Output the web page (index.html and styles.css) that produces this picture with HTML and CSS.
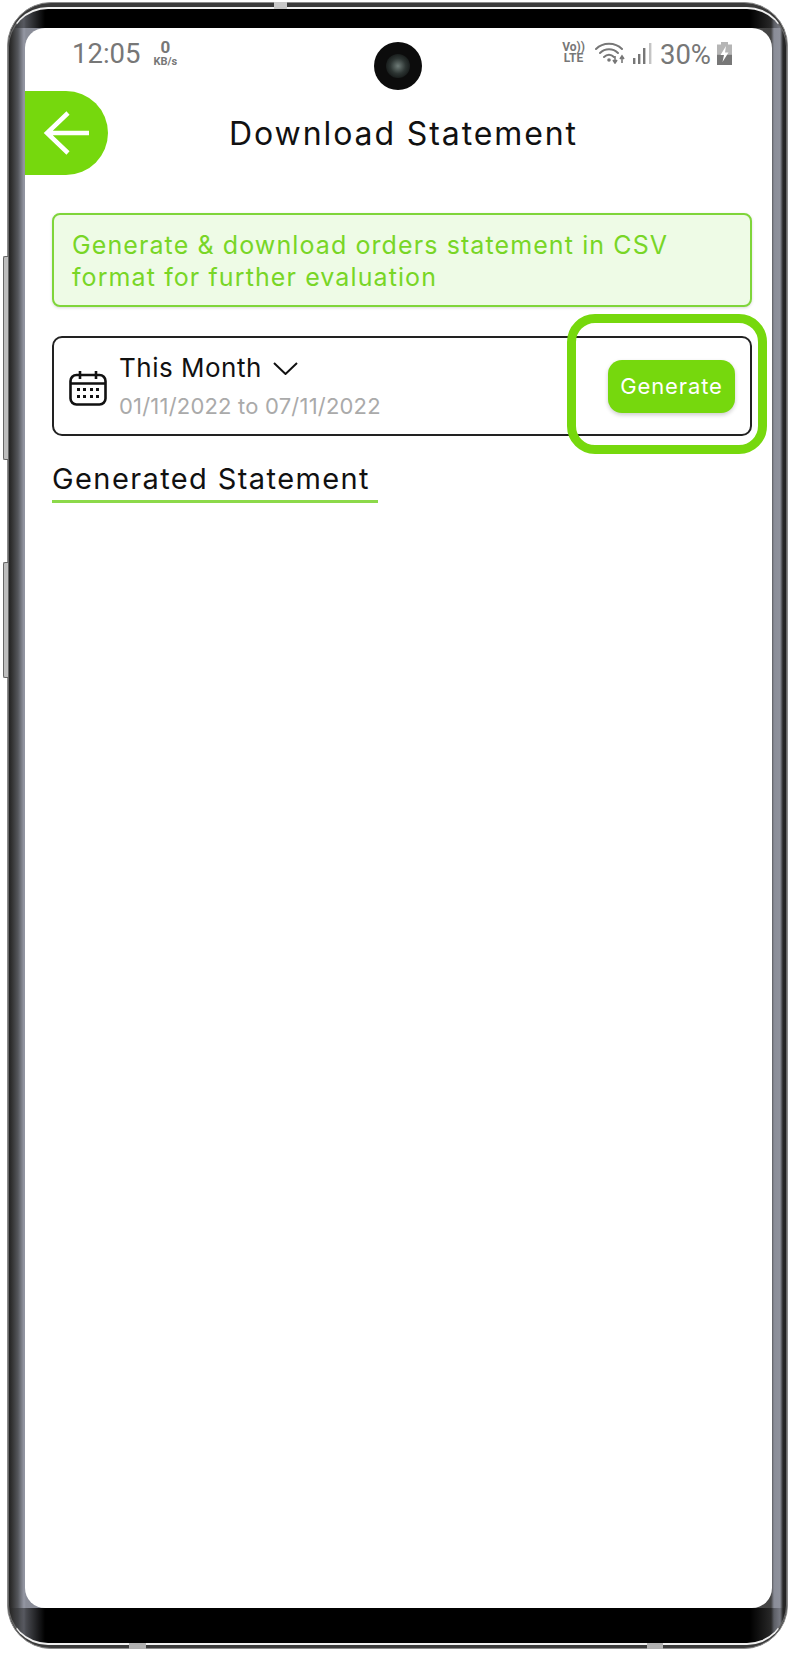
FILE: index.html
```html
<!DOCTYPE html>
<html lang="en">
<head>
  <meta charset="UTF-8">
  <meta name="viewport" content="width=device-width, initial-scale=1.0">
  <title>Download Statement</title>
  <link rel="stylesheet" href="styles.css">
</head>
<body>
  <div class="phone">
    <span class="side-key key-top"></span>
    <span class="side-key key-lower"></span>
    <span class="edge-nub nub-top"></span>
    <span class="edge-nub nub-bottom-left"></span>
    <span class="edge-nub nub-bottom-right"></span>
    <div class="phone-rim">
      <div class="bezel">
        <div class="screen">
          <div class="camera"><span class="camera-lens"></span></div>

          <div class="status-bar">
            <div class="status-left">
              <span class="clock">12:05</span>
              <span class="net-speed"><b>0</b><small>KB/s</small></span>
            </div>
            <div class="status-right">
              <span class="volte"><span>Vo))</span><span>LTE</span></span>
              <svg class="wifi" viewBox="0 0 32 22" width="32" height="22" aria-hidden="true">
                <g fill="none" stroke="#777" stroke-width="2" stroke-linecap="round">
                  <path d="M1 7 C8 0 20 0 27 7"/>
                  <path d="M5 11 C10 6 18 6 23 11"/>
                  <path d="M9 15 C12 12 16 12 19 15"/>
                </g>
                <circle cx="14" cy="18" r="1.8" fill="#777"/>
                <path d="M20 14v6M18 18l2 3 2-3M27 21v-6M25 17l2-3 2 3" fill="none" stroke="#777" stroke-width="1.6"/>
              </svg>
              <svg class="signal" viewBox="0 0 20 22" width="20" height="22" aria-hidden="true">
                <rect x="1" y="16" width="2.4" height="6" fill="#777"/>
                <rect x="6" y="12" width="2.4" height="10" fill="#777"/>
                <rect x="11" y="6" width="2.4" height="16" fill="#777"/>
                <rect x="17" y="1" width="2.4" height="21" fill="#c4c4c4"/>
              </svg>
              <span class="battery-text">30%</span>
              <svg class="battery" viewBox="0 0 15 23" width="15" height="23" aria-hidden="true">
                <rect x="4" y="0" width="7" height="3" fill="#b5b5b5"/>
                <rect x="0" y="2.5" width="15" height="10" fill="#b5b5b5"/>
                <rect x="0" y="12.5" width="15" height="10.5" fill="#777"/>
                <path d="M9 4 L3.5 13 H7 L5.5 20 L11.5 10.5 H8 Z" fill="#fff"/>
              </svg>
            </div>
          </div>

          <header class="page-header">
            <a class="back-btn" href="#" aria-label="Back">
              <svg viewBox="0 0 48 46" width="48" height="46" aria-hidden="true">
                <path d="M46 23H4M25 3 4 23l21 20" fill="none" stroke="#fff" stroke-width="4.5"/>
              </svg>
            </a>
            <h1>Download Statement</h1>
          </header>

          <main class="content">
            <p class="notice">Generate &amp; download orders statement in CSV format for further evaluation</p>

            <div class="period-card">
              <svg class="calendar" viewBox="0 0 38 36" width="38" height="36" aria-hidden="true">
                <rect x="1.5" y="5" width="35" height="29.5" rx="6" fill="none" stroke="#111" stroke-width="2.6"/>
                <path d="M1.5 13.5h35M11 1v8M27 1v8" fill="none" stroke="#111" stroke-width="2.6"/>
                <g fill="#111">
                  <rect x="8" y="18" width="3" height="3"/><rect x="14" y="18" width="3" height="3"/>
                  <rect x="21" y="18" width="3" height="3"/><rect x="27" y="18" width="3" height="3"/>
                  <rect x="8" y="25" width="3" height="3"/><rect x="14" y="25" width="3" height="3"/>
                  <rect x="21" y="25" width="3" height="3"/><rect x="27" y="25" width="3" height="3"/>
                </g>
              </svg>
              <div class="period-info">
                <div class="period-name">
                  This Month
                  <svg viewBox="0 0 25 13" width="25" height="13" aria-hidden="true">
                    <path d="M1 1l11.5 11L24 1" fill="none" stroke="#111" stroke-width="2"/>
                  </svg>
                </div>
                <div class="period-dates">01/11/2022 to 07/11/2022</div>
              </div>
              <button class="generate-btn">Generate</button>
              <span class="highlight-ring"></span>
            </div>

            <h2 class="section-title">Generated Statement</h2>
          </main>
        </div>
      </div>
    </div>
  </div>
</body>
</html>
```

FILE: styles.css
```css
* {
  box-sizing: border-box;
}

body {
  margin: 0;
  background-color: #fff;
  font-family: Inter, "Liberation Sans", sans-serif;
  color: #111;
}

/* phone frame */
.phone {
  position: relative;
  width: 781px;
  height: 1647px;
  margin: 2px 0 0 7px;
}

.phone-rim {
  height: 100%;
  padding: 4px 0 3px;
  border: 1px solid #8a8a8a;
  border-radius: 44px;
  background-color: #3a3a3a;
}

.bezel {
  height: 100%;
  padding: 19px 14px 35px 16px;
  border-style: solid;
  border-width: 2px 1px;
  border-color: #f0f0f0 #666;
  border-radius: 40px;
  background:
    linear-gradient(to right, transparent 0, #000 36px, #000 calc(100% - 36px), transparent 100%) top / 100% 19px no-repeat,
    linear-gradient(to right, transparent 0, #000 36px, #000 calc(100% - 36px), transparent 100%) bottom / 100% 35px no-repeat,
    linear-gradient(to right, #222 0, #333 3px, #55575c 9px, #9598a4 15px, #8a8d98 17px, #444 calc(100% - 15px), #8a8d98 calc(100% - 12px), #8f929c calc(100% - 6px), #2a2a2a calc(100% - 3px), #222 100%);
}

.screen {
  position: relative;
  height: 100%;
  border-radius: 20px;
  background-color: #fff;
  overflow: hidden;
}

.side-key {
  position: absolute;
  left: -4px;
  width: 5px;
  border: 1px solid #666;
  border-right: none;
  border-radius: 2px 0 0 2px;
  background-color: #bdbdbd;
}

.key-top {
  top: 254px;
  height: 204px;
}

.key-lower {
  top: 560px;
  height: 116px;
}

.edge-nub {
  position: absolute;
  height: 7px;
  background-color: #b0b0b0;
}

.nub-top {
  top: 0;
  left: 267px;
  width: 13px;
  background-color: #c8c8c8;
}

.nub-bottom-left {
  bottom: -1px;
  left: 122px;
  width: 17px;
}

.nub-bottom-right {
  bottom: -1px;
  left: 640px;
  width: 16px;
}

.camera {
  position: absolute;
  top: 14px;
  left: 349px;
  display: flex;
  align-items: center;
  justify-content: center;
  width: 48px;
  height: 48px;
  border-radius: 50%;
  background-color: #0c0c0c;
}

.camera-lens {
  width: 24px;
  height: 24px;
  border-radius: 50%;
  background: radial-gradient(circle, #6f7c78 0, #2d3533 45%, #161a19 75%);
}

/* status bar */
.status-bar {
  display: flex;
  justify-content: space-between;
  align-items: flex-start;
  height: 63px;
  padding: 11px 40px 0 47px;
  color: #777;
  font-family: Roboto, sans-serif;
}

.status-left {
  display: flex;
  gap: 13px;
}

.clock {
  font-size: 27.5px;
  line-height: 27px;
  margin-top: 1px;
}

.net-speed {
  display: flex;
  flex-direction: column;
  align-items: center;
  line-height: 1;
}

.net-speed b {
  font-size: 17px;
}

.net-speed small {
  font-size: 11px;
  font-weight: 700;
}

.status-right {
  display: flex;
  align-items: center;
  gap: 5px;
  margin-top: 1px;
}

.volte {
  display: flex;
  flex-direction: column;
  align-items: center;
  margin-right: 5px;
  font-size: 12px;
  font-weight: 700;
  line-height: 11px;
}

.battery-text {
  margin: 3px 1px 0 3px;
  font-size: 27.5px;
  line-height: 23px;
}

/* header */
.page-header {
  display: grid;
  grid-template-columns: 83px 1fr 73px;
  align-items: center;
}

.back-btn {
  display: flex;
  align-items: center;
  height: 84px;
  padding-left: 18px;
  border-radius: 0 42px 42px 0;
  background-color: #76d80d;
}

.page-header h1 {
  margin: 0;
  font-size: 32px;
  font-weight: 400;
  letter-spacing: 1.9px;
  text-align: center;
  color: #111;
}

/* content */
.content {
  padding: 38px 20px 0 27px;
}

.notice {
  margin: 0;
  padding: 14px 18px 12px;
  border: 2px solid #7fd53a;
  border-radius: 8px;
  background-color: #eefbe6;
  box-shadow: 0 1px 3px rgba(0, 0, 0, 0.15);
  color: #78d626;
  font-size: 25px;
  letter-spacing: 1.1px;
  line-height: 32px;
}

.period-card {
  position: relative;
  display: flex;
  align-items: center;
  height: 100px;
  margin-top: 29px;
  padding: 0 15px;
  border: 2px solid #222;
  border-radius: 10px;
}

.calendar {
  margin: 4px 12px 0 0;
}

.period-info {
  flex: 1;
}

.period-name {
  display: flex;
  align-items: center;
  gap: 11px;
  font-size: 26px;
  letter-spacing: 0.5px;
  line-height: 34px;
  color: #111;
}

.period-dates {
  margin-top: 6px;
  font-size: 22px;
  letter-spacing: 0.2px;
  line-height: 30px;
  color: #aaa;
}

.generate-btn {
  width: 127px;
  height: 53px;
  border: none;
  border-radius: 14px;
  background-color: #76d80d;
  box-shadow: 0 2px 4px rgba(0, 0, 0, 0.2);
  color: #fff;
  font-family: inherit;
  font-size: 22px;
  letter-spacing: 0.9px;
  cursor: pointer;
}

.highlight-ring {
  position: absolute;
  top: -24px;
  right: -17px;
  bottom: -20px;
  width: 200px;
  border: 9px solid #76d80d;
  border-radius: 28px;
}

.section-title {
  display: inline-block;
  margin: 25px 0 0;
  padding: 0 8px 3px 0;
  border-bottom: 3px solid #8cd94a;
  font-size: 29px;
  font-weight: 400;
  letter-spacing: 1.4px;
  line-height: 36px;
  color: #111;
}
```
